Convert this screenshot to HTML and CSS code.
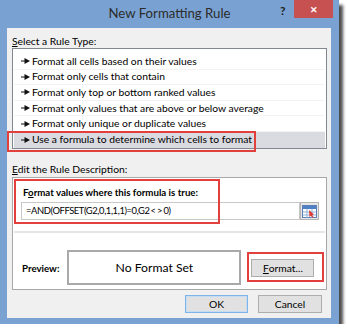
FILE: index.html
```html
<!DOCTYPE html>
<html lang="en">
<head>
<meta charset="UTF-8">
<meta name="viewport" content="width=device-width, initial-scale=1.0">
<title>New Formatting Rule</title>
<link rel="stylesheet" href="styles.css">
</head>
<body>

<div class="window">
    <!-- Title bar -->
    <div class="titlebar">
        <span class="title">New Formatting Rule</span>
        <span class="help">?</span>
        <span class="close">&#x2715;</span>
    </div>

    <div class="client">
        <div class="label"><u>S</u>elect a Rule Type:</div>
        <div class="rule-list">
            <div class="rule"><svg class="arrow" width="9" height="6" viewBox="0 0 9 6"><path d="M0 2.5h4v1H0z M3.5 0L9 3L3.5 6z" fill="#111"/></svg>Format all cells based on their values</div>
            <div class="rule"><svg class="arrow" width="9" height="6" viewBox="0 0 9 6"><path d="M0 2.5h4v1H0z M3.5 0L9 3L3.5 6z" fill="#111"/></svg>Format only cells that contain</div>
            <div class="rule"><svg class="arrow" width="9" height="6" viewBox="0 0 9 6"><path d="M0 2.5h4v1H0z M3.5 0L9 3L3.5 6z" fill="#111"/></svg>Format only top or bottom ranked values</div>
            <div class="rule"><svg class="arrow" width="9" height="6" viewBox="0 0 9 6"><path d="M0 2.5h4v1H0z M3.5 0L9 3L3.5 6z" fill="#111"/></svg>Format only values that are above or below average</div>
            <div class="rule"><svg class="arrow" width="9" height="6" viewBox="0 0 9 6"><path d="M0 2.5h4v1H0z M3.5 0L9 3L3.5 6z" fill="#111"/></svg>Format only unique or duplicate values</div>
            <div class="rule selected"><svg class="arrow" width="9" height="6" viewBox="0 0 9 6"><path d="M0 2.5h4v1H0z M3.5 0L9 3L3.5 6z" fill="#111"/></svg>Use a formula to determine which cells to format</div>
        </div>
        <!-- annotation -->
        <div class="mark mark-rule"></div>

        <div class="label label-edit"><u>E</u>dit the Rule Description:</div>
        <div class="desc">
            <div class="desc-top">
                <div class="bold-label">F<u>o</u>rmat values where this formula is true:</div>
                <div class="formula-row">
                    <div class="formula">=AND(OFFSET(G2,0,1,1,1)=0,G2<span class="ne">&lt;&gt;</span>0)</div>
                    <div class="refedit">
                        <svg width="15" height="13" viewBox="0 0 15 13">
                            <rect x="0.5" y="0.5" width="14" height="12" fill="#fff" stroke="#5b7fb8"/>
                            <rect x="1" y="1" width="13" height="3" fill="#4f7fc4"/>
                            <path d="M1 7h13M1 10h13M5 4v9M10 4v9" stroke="#8fb0dc" stroke-width="1"/>
                            <path d="M7 5l5 4.5-2 .5 1.5 2-1 .7-1.5-2-1.5 1.2z" fill="#e03a2e"/>
                        </svg>
                    </div>
                </div>
            </div>
            <div class="desc-bottom">
                <div class="bold-label">Preview:</div>
                <div class="preview">No Format Set</div>
                <div class="btn btn-format"><u>F</u>ormat...</div>
            </div>
            <!-- annotations -->
            <div class="mark mark-formula"></div>
            <div class="mark mark-format"></div>
        </div>

        <div class="buttons">
            <div class="btn btn-ok">OK</div>
            <div class="btn">Cancel</div>
        </div>
    </div>
</div>

</body>
</html>
```
FILE: styles.css
```css
body {
margin: 0;
background-color: #fff;
font-family: Lato, "Open Sans", sans-serif;
font-size: 10.3px;
color: #000;
}
.window {
width: 339px;
height: 324px;
background-color: #79a2d3;
box-shadow: 4px 5px 3px rgba(0,0,0,0.7);
display: flex;
flex-direction: column;
}
.titlebar {
height: 28px;
position: relative;
display: flex;
justify-content: center;
align-items: center;
}
.title {
font-size: 13.2px;
color: #2c2c2c;
margin-top: -2px;
}
.help {
position: absolute;
left: 280px;
top: 3px;
font-weight: bold;
font-size: 12px;
color: #222;
}
.close {
position: absolute;
right: 6px;
top: 0;
width: 39px;
height: 18px;
background-color: #c75050;
color: #fff;
font-size: 9px;
font-weight: bold;
display: flex;
justify-content: center;
align-items: center;
}
.client {
position: relative;
margin: 0 8px 0 7px;
height: 290px;
background-color: #f0f0f0;
padding: 7px 4px 0 5px;
box-sizing: border-box;
}
.label {
line-height: 13px;
height: 13px;
}
.rule-list {
background-color: #fff;
border: 1px solid #828790;
height: 101px;
box-sizing: border-box;
padding: 5px 1px 0 1px;
}
.rule {
height: 15.6px;
line-height: 15px;
display: flex;
align-items: center;
padding-left: 7px;
border-bottom: 1px solid #f3f3f3;
box-sizing: border-box;
white-space: nowrap;
}
.rule.selected {
background-color: #dadae1;
border-bottom: none;
}
.arrow {
margin-right: 2px;
}
.mark {
position: absolute;
border: 2px solid #e2403d;
box-sizing: border-box;
}
.mark-rule {
left: 0;
top: 103px;
width: 249px;
height: 21px;
}
.label-edit {
margin-top: 14px;
}
.desc {
position: relative;
margin-top: 1px;
height: 113px;
background-color: #fff;
border: 1px solid #a8a8a8;
box-sizing: border-box;
display: flex;
flex-direction: column;
}
.desc-top {
padding: 7px 0 0 9px;
height: 55px;
box-sizing: border-box;
border-bottom: 2px solid #e6e6e6;
margin: 0 1px;
}
.bold-label {
font-weight: bold;
font-size: 9.7px;
line-height: 14px;
}
.formula-row {
display: flex;
margin-top: 3px;
margin-left: -2px;
}
.formula {
width: 279px;
height: 18px;
border: 1px solid #c8c8c8;
box-sizing: border-box;
font-size: 9.4px;
letter-spacing: -0.4px;
line-height: 16px;
padding-left: 4px;
}
.ne {
letter-spacing: 1px;
margin-left: 1px;
}
.refedit {
width: 19px;
height: 18px;
background-color: #e6e6e6;
border: 1px solid #b4b4b4;
box-sizing: border-box;
display: flex;
justify-content: center;
align-items: center;
}
.mark-formula {
left: 1px;
top: 1px;
width: 206px;
height: 45px;
}
.desc-bottom {
display: flex;
align-items: center;
padding: 14px 0 0 9px;
height: 55px;
box-sizing: border-box;
}
.preview {
margin-left: 8px;
width: 174px;
height: 35px;
border: 2px solid #a9a9a9;
box-sizing: border-box;
display: flex;
justify-content: center;
align-items: center;
font-size: 12.2px;
}
.btn {
height: 18px;
width: 64px;
background-color: #e1e1e1;
border: 1px solid #adadad;
box-sizing: border-box;
display: flex;
justify-content: center;
align-items: center;
}
.btn-format {
margin-left: 10px;
width: 63px;
}
.mark-format {
left: 234px;
top: 74px;
width: 77px;
height: 30px;
}
.buttons {
display: flex;
justify-content: flex-end;
gap: 10px;
margin-top: 5px;
padding-right: 5px;
}
.btn-ok {
width: 63px;
border-color: #7eb4ea;
box-shadow: inset 0 0 0 1px #c6dcf3;
}
```
